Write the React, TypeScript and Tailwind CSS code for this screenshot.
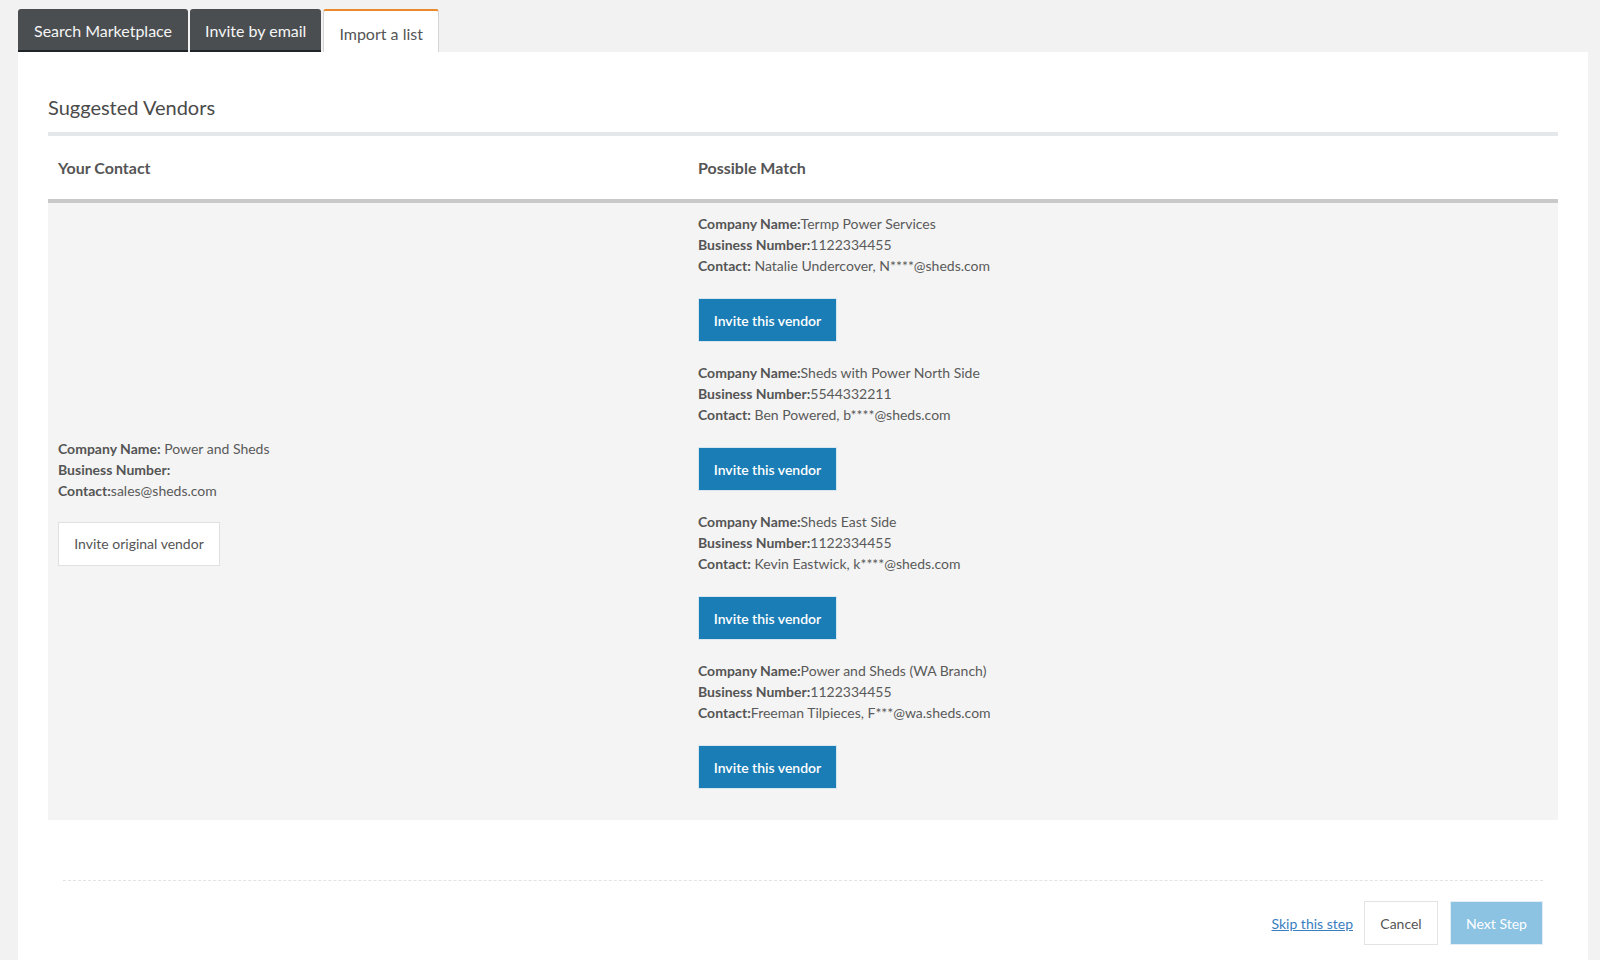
import React from "react";

type Vendor = { name: string; number: string; contact: string; contactSpace: boolean };

const vendors: Vendor[] = [
  { name: "Termp Power Services", number: "1122334455", contact: "Natalie Undercover, N****@sheds.com", contactSpace: true },
  { name: "Sheds with Power North Side", number: "5544332211", contact: "Ben Powered, b****@sheds.com", contactSpace: true },
  { name: "Sheds East Side", number: "1122334455", contact: "Kevin Eastwick, k****@sheds.com", contactSpace: true },
  { name: "Power and Sheds (WA Branch)", number: "1122334455", contact: "Freeman Tilpieces, F***@wa.sheds.com", contactSpace: false },
];

export default function App() {
  return (
    <div className="min-h-screen bg-[#f2f2f2] font-['Lato','Open_Sans',sans-serif] text-[#5a5a5a]">
      <div className="pl-[18px] pr-[12px] pt-[9px]">
        {/* Tabs */}
        <div className="flex items-end h-[43px] gap-[2px]">
          <div className="h-[43px] px-[16px] flex items-center bg-[#4a4e51] text-[#f5f5f5] text-[16px] rounded-t-[3px] border-b-2 border-[#1f2428] pt-[2px]">
            Search Marketplace
          </div>
          <div className="h-[43px] px-[15px] flex items-center bg-[#4a4e51] text-[#f5f5f5] text-[16px] rounded-t-[3px] border-b-2 border-[#1f2428] pt-[2px]">
            Invite by email
          </div>
          <div className="h-[43px] px-[15px] flex items-center bg-white text-[#555] text-[16px] rounded-t-[3px] border-t-2 border-[#e8892b] border-x border-x-[#d4d4d4] pt-[4px]">
            Import a list
          </div>
        </div>

        {/* Panel */}
        <div className="bg-white px-[30px] pt-[41px] pb-[30px]">
          <h2 className="text-[20px] leading-[28px] text-[#4a4a4a] mb-[11px]">Suggested Vendors</h2>

          <div className="border-t-4 border-[#e5e8eb]">
            <div className="flex h-[67px] items-center text-[16px] font-bold text-[#555] border-b-4 border-[#c9c9c9]">
              <div className="w-[640px] px-[10px]">Your Contact</div>
              <div className="flex-1 px-[10px]">Possible Match</div>
            </div>

            <div className="flex bg-[#f4f4f4] text-[14px] leading-[21px]">
              <div className="w-[640px] px-[10px] flex items-center">
                <div>
                  <div className="mb-[21px]">
                    <div><span className="font-bold text-[#555]">Company Name:</span> Power and Sheds</div>
                    <div><span className="font-bold text-[#555]">Business Number:</span></div>
                    <div><span className="font-bold text-[#555]">Contact:</span>sales@sheds.com</div>
                  </div>
                  <button className="h-[44px] w-[162px] bg-white border border-[#e0e0e0] text-[14px] text-[#555] mb-[20px]">
                    Invite original vendor
                  </button>
                </div>
              </div>
              <div className="flex-1 px-[10px] pt-[10px] pb-[11px]">
                {vendors.map((v, i) => (
                  <div key={i}>
                    <div className="mb-[22px]">
                      <div><span className="font-bold text-[#555]">Company Name:</span>{v.name}</div>
                      <div><span className="font-bold text-[#555]">Business Number:</span>{v.number}</div>
                      <div><span className="font-bold text-[#555]">Contact:</span>{v.contactSpace ? " " : ""}{v.contact}</div>
                    </div>
                    <button className="h-[44px] w-[139px] bg-[#1a7db6] border border-[#d8e6f0] text-white text-[14px] font-semibold mb-[20px]">
                      Invite this vendor
                    </button>
                  </div>
                ))}
              </div>
            </div>
          </div>

          {/* Footer */}
          <div className="mt-[60px] mx-[15px] border-t border-dashed border-[#e3e3e3] pt-[20px] flex justify-end items-center">
            <a href="#" className="text-[14px] text-[#3a7ebf] underline mr-[11px]">Skip this step</a>
            <button className="h-[44px] w-[74px] bg-white border border-[#e3e3e3] text-[14px] text-[#555] mr-[12px]">Cancel</button>
            <button className="h-[44px] w-[93px] bg-[#8cc3e3] border border-[#e3eef6] text-[14px] text-white">Next Step</button>
          </div>
        </div>
      </div>
    </div>
  );
}
